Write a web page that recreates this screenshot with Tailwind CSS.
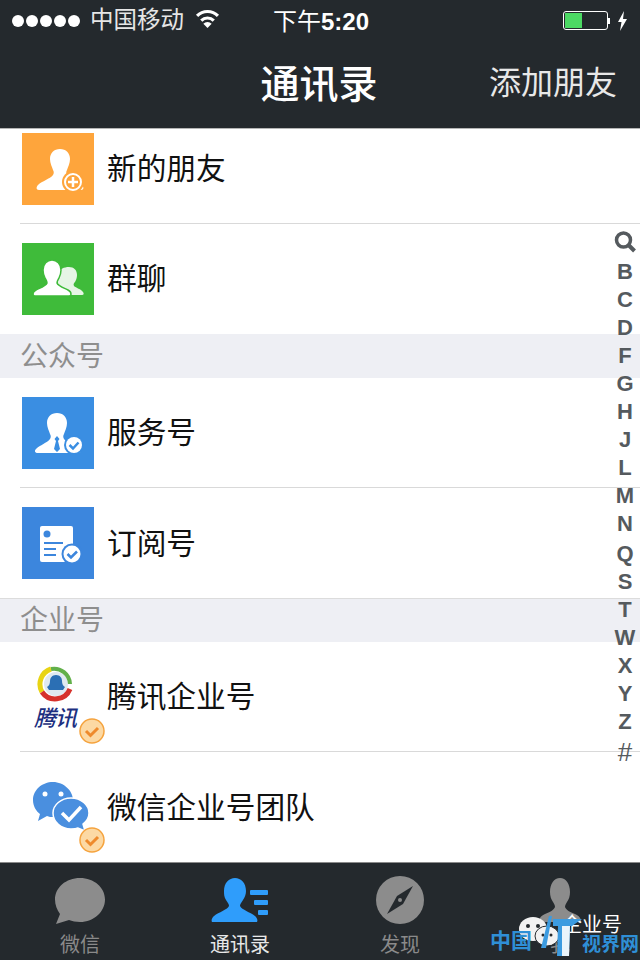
<!DOCTYPE html>
<html lang="zh-CN">
<head>
  <meta charset="UTF-8" />
  <title>通讯录</title>
  <script src="https://cdn.jsdelivr.net/npm/@tailwindcss/browser@4"></script>
</head>
<body class="bg-white font-['Liberation_Sans','Noto_Sans_CJK_SC',sans-serif] text-[#111]">
<div class="relative w-[640px] h-[960px] overflow-hidden flex flex-col">

  <!-- Status bar + nav -->
  <header class="h-[129px] shrink-0 bg-[#24292d] text-white border-b border-[#b5b5b5]">
    <div class="relative h-[41px] flex items-center pl-[12px] pr-[12px]">
      <div class="flex gap-[2px]">
        <span class="w-[12px] h-[12px] rounded-full bg-white"></span>
        <span class="w-[12px] h-[12px] rounded-full bg-white"></span>
        <span class="w-[12px] h-[12px] rounded-full bg-white"></span>
        <span class="w-[12px] h-[12px] rounded-full bg-white"></span>
        <span class="w-[12px] h-[12px] rounded-full bg-white"></span>
      </div>
      <span class="ml-[10px] text-[23.5px] leading-none text-[#e6e6e6]">中国移动</span>
      <svg class="ml-[11px] mt-[-4px]" width="25" height="19" viewBox="0 0 24 18" fill="none" stroke="#fff" stroke-width="3">
        <path d="M2 6.500a14 14 0 0 1 20 0" />
        <path d="M6 11a8.500 8.500 0 0 1 12 0" />
        <path d="M12 18l-4-4a5.600 5.600 0 0 1 8 0z" fill="#fff" stroke="none" />
      </svg>
      <span class="absolute left-[273px] top-[8px] text-[24px] leading-[28px]">下午<span class="font-bold">5:20</span></span>
      <div class="ml-auto flex items-center">
        <div class="w-[45px] h-[19px] rounded-[3px] border border-white p-[1px]">
          <div class="w-[17px] h-full bg-[#4cd964]"></div>
        </div>
        <span class="w-[2px] h-[6px] bg-white"></span>
        <svg class="ml-[7px]" width="11" height="20" viewBox="0 0 11 20"><path d="M7 0L1 11h3.500L3 20l7-12H6z" fill="#fff" /></svg>
      </div>
    </div>
    <div class="relative h-[87px] flex items-center justify-center">
      <h1 class="ml-[-2px] text-[39px] leading-none font-medium">通讯录</h1>
      <span class="absolute right-[23px] top-[26px] text-[32px] leading-none text-[#e8e8e8]">添加朋友</span>
    </div>
  </header>

  <!-- Contact list -->
  <main class="flex-1 flex flex-col">
    <div class="h-[94px] pl-[22px] flex items-start pt-[4px] gap-[13px]">
      <div class="w-[72px] h-[72px] bg-[#fea53c]">
        <svg width="72" height="72" viewBox="0 0 72 72">
          <path d="M38 16c6 0 10 4 10 10 0 4-2 8-3 11-1 2-1 3 0 5 3 4 11 6 15 10 2 2 2 5-1 5H17c-3 0-3-3-1-5 4-4 12-6 15-10 1-2 1-3 0-5-1-3-3-7-3-11 0-6 4-10 10-10z" fill="#fff" />
          <circle cx="51" cy="49" r="11" fill="#fea53c" />
          <circle cx="51" cy="49" r="8" fill="none" stroke="#fff" stroke-width="2" />
          <path d="M51 44v10M46 49h10" stroke="#fff" stroke-width="2.500" />
        </svg>
      </div>
      <span class="text-[29.7px] leading-[72px]">新的朋友</span>
    </div>
    <div class="ml-[20px] h-px bg-[#d9d9d9]"></div>

    <div class="h-[110px] pl-[22px] flex items-center gap-[13px]">
      <div class="w-[72px] h-[72px] bg-[#3fbb3a]">
        <svg width="72" height="72" viewBox="0 0 72 72">
          <path d="M47 24c5 0 8 3 8 8 0 3-1 5-2 7-1 1-2 2-1 4 2 2 7 3 9 6 1 1 1 3-1 3H36V30c2-4 6-6 11-6z" fill="#e6f5e5" />
          <path d="M11 51c0-1 1-3 3-4 4-2 10-4 11-7 0-2-1-3-2-5-1-2-2-5-2-8 0-6 4-10 9-10s9 4 9 10c0 3-1 6-2 8-1 2-2 3-2 5 1 3 7 5 11 7 2 1 3 3 3 4 0 2-1 2-2 2H13c-1 0-2 0-2-2z" fill="#fff" stroke="#3fbb3a" stroke-width="1.500" />
        </svg>
      </div>
      <span class="text-[29.7px] leading-none">群聊</span>
    </div>

    <div class="h-[44px] bg-[#eeeff4] pl-[20px] pt-[1px] flex items-center text-[28px] leading-none text-[#8e8e8e]">公众号</div>

    <div class="h-[109px] pl-[22px] flex items-center gap-[13px]">
      <div class="w-[72px] h-[72px] bg-[#3a8ee2]">
        <svg width="72" height="72" viewBox="0 0 72 72">
          <path d="M35 16c6 0 10 4 10 10 0 4-2 8-3 11-1 2-1 3 0 5 3 4 11 6 15 10 2 2 2 4-1 4H16c-3 0-4-2-2-4 4-4 11-6 14-10 1-2 1-3 0-5-1-3-3-7-3-11 0-6 4-10 10-10z" fill="#fff" />
          <path d="M35 39l-2.500 3 1.500 2-2 8 3 3 3-3-2-8 1.500-2z" fill="#3a8ee2" />
          <circle cx="52" cy="48" r="10" fill="#3a8ee2" />
          <circle cx="52" cy="48" r="8" fill="#fff" />
          <path d="M47.500 48l3.500 3.500 5.500-6" fill="none" stroke="#3a8ee2" stroke-width="2.500" />
        </svg>
      </div>
      <span class="mt-[1px] text-[29.7px] leading-none">服务号</span>
    </div>
    <div class="ml-[20px] h-px bg-[#d9d9d9]"></div>

    <div class="h-[110px] pl-[22px] flex items-center gap-[13px]">
      <div class="w-[72px] h-[72px] bg-[#3c86dd]">
        <svg width="72" height="72" viewBox="0 0 72 72">
          <rect x="18" y="19" width="33" height="36" rx="2" fill="#fff" />
          <circle cx="25" cy="27" r="3.500" fill="#3c86dd" />
          <path d="M22 36h19M22 42h12M22 48h12" stroke="#3c86dd" stroke-width="2.200" />
          <circle cx="50" cy="47" r="10.500" fill="#3c86dd" />
          <circle cx="50" cy="47" r="8.500" fill="#fff" />
          <path d="M45.500 47l3.500 3.500 6-6" fill="none" stroke="#3c86dd" stroke-width="2.500" />
        </svg>
      </div>
      <span class="mt-[1px] text-[29.7px] leading-none">订阅号</span>
    </div>

    <div class="h-[44px] bg-[#eeeff4] border-t border-[#dcdcdc] pl-[20px] flex items-center text-[28px] leading-none text-[#8e8e8e]">企业号</div>

    <div class="h-[109px] pl-[22px] flex items-center gap-[13px]">
      <div class="relative w-[72px] h-[72px]">
        <svg class="absolute left-[15px] top-[4px]" width="38" height="38" viewBox="0 0 38 38">
          <circle cx="19" cy="19" r="12" fill="#dfe9f0" />
          <path d="M5 27A16 16 0 0 1 14 4" fill="none" stroke="#e8d414" stroke-width="5" />
          <path d="M14 4a16 16 0 0 1 19 15" fill="none" stroke="#62b04a" stroke-width="4" />
          <path d="M5 27a16 16 0 0 0 28-3" fill="none" stroke="#d6312b" stroke-width="5" />
          <path d="M19 10c4 0 6 3 6 6 0 3 1 5 3 6l-2 3H12l-2-3c2-1 3-3 3-6 0-3 2-6 6-6z" fill="#2b6fb4" />
        </svg>
        <span class="absolute left-[12px] top-[47px] text-[22px] leading-none italic font-medium text-[#1c2f80] tracking-[-1px]">腾讯</span>
        <svg class="absolute left-[57px] top-[57px]" width="26" height="26" viewBox="0 0 26 26">
          <circle cx="13" cy="13" r="12" fill="#fcd9a4" stroke="#f5a33e" stroke-width="1.500" />
          <path d="M7 13l4.500 4.500L19 10" fill="none" stroke="#ee8a2c" stroke-width="3" />
        </svg>
      </div>
      <span class="mt-[1px] text-[29.7px] leading-none">腾讯企业号</span>
    </div>
    <div class="ml-[20px] h-px bg-[#d9d9d9]"></div>

    <div class="h-[110px] pl-[22px] flex items-center gap-[13px]">
      <div class="relative w-[72px] h-[72px]">
        <svg class="absolute left-[10px] top-[10px]" width="60" height="54" viewBox="0 0 60 54">
          <path d="M21 1C10 1 1 9 1 19c0 6 3 11 7 14l-2 7 9-5c2 1 4 1 6 1 11 0 20-8 20-17S32 1 21 1z" fill="#4a8fdf" />
          <circle cx="13" cy="13" r="2.500" fill="#fff" />
          <circle cx="29" cy="13" r="2.500" fill="#fff" />
          <path d="M39 17c-10 0-18 7-18 15 0 9 8 16 18 16 3 0 5 0 7-1l7 3-2-7c4-3 6-7 6-11 0-8-8-15-18-15z" fill="#4a8fdf" stroke="#fff" stroke-width="1.500" />
          <path d="M30 32l7 7 12-13" fill="none" stroke="#fff" stroke-width="3.500" />
        </svg>
        <svg class="absolute left-[57px] top-[56px]" width="26" height="26" viewBox="0 0 26 26">
          <circle cx="13" cy="13" r="12" fill="#fcd9a4" stroke="#f5a33e" stroke-width="1.500" />
          <path d="M7 13l4.500 4.500L19 10" fill="none" stroke="#ee8a2c" stroke-width="3" />
        </svg>
      </div>
      <span class="mt-[1px] text-[29.7px] leading-none">微信企业号团队</span>
    </div>
  </main>

  <!-- Tab bar -->
  <nav class="h-[98px] shrink-0 bg-[#24292d] border-t border-[#8a8a8a] grid grid-cols-4 text-[20px] leading-none text-[#8a8a8a]">
    <div class="flex flex-col items-center pt-[15px]">
      <svg width="52" height="46" viewBox="0 0 52 46"><path d="M26 0c14 0 25 9.500 25 21.500S40 44 26 44c-4 0-8-1-11-2L2 46l4-10C3 32 1 27 1 21.500 1 9.500 12 0 26 0z" fill="#8c8c8c" /></svg>
      <span class="mt-[11px]">微信</span>
    </div>
    <div class="flex flex-col items-center pt-[15px] text-[#e8e8e8]">
      <svg width="58" height="44" viewBox="0 0 58 44">
        <path d="M1 44c-1-2 0-4 2-6 5-4 13-6 15-10 0-2-1-3-3-6-2-3-2-6-2-9C13 5 18 0 24 0s11 5 11 13c0 3-1 6-3 9-2 3-3 4-3 6 2 4 10 6 15 10 2 2 3 4 2 6z" fill="#2f9dfb" />
        <rect x="39" y="12" width="18" height="5" rx="1" fill="#2f9dfb" />
        <rect x="43" y="22" width="14" height="5" rx="1" fill="#2f9dfb" />
        <rect x="47" y="32" width="10" height="5" rx="1" fill="#2f9dfb" />
      </svg>
      <span class="mt-[13px]">通讯录</span>
    </div>
    <div class="flex flex-col items-center pt-[13px]">
      <svg width="48" height="48" viewBox="0 0 48 48">
        <circle cx="24" cy="24" r="24" fill="#8c8c8c" />
        <path d="M37 10L27 28 11 38l10-18z" fill="#24292d" />
        <circle cx="24" cy="24" r="2" fill="#8c8c8c" />
      </svg>
      <span class="mt-[11px]">发现</span>
    </div>
    <div class="flex flex-col items-center pt-[15px]">
      <svg width="44" height="44" viewBox="0 0 44 44"><path d="M1 44c0-4 2-6 6-8 5-2 9-4 10-7 0-2-1-3-2-5-2-3-3-6-3-10 0-8 4-14 10-14s10 6 10 14c0 4-1 7-3 10-1 2-2 3-2 5 1 3 5 5 10 7 4 2 6 4 6 8z" fill="#8c8c8c" /></svg>
      <span class="mt-[13px]">我</span>
    </div>
  </nav>

  <!-- Alphabet index over the list -->
  <div class="absolute left-[610px] top-[228px] w-[30px] flex flex-col items-center text-[22px] leading-[28px] font-bold text-[#555a5e]">
    <svg class="mb-[4px]" width="22" height="26" viewBox="0 0 22 26" fill="none" stroke="#555a5e">
      <circle cx="9.500" cy="12" r="7" stroke-width="3.500" />
      <path d="M14.500 17l6 6" stroke-width="4" />
    </svg>
    <span>B</span><span>C</span><span>D</span><span>F</span><span>G</span><span>H</span><span>J</span><span>L</span><span>M</span><span>N</span>
    <span class="mt-[2px]">Q</span><span>S</span><span>T</span><span>W</span><span>X</span><span>Y</span><span>Z</span>
    <span class="mt-[2px] text-[26px] font-normal">#</span>
  </div>

  <!-- Watermark over the tab bar -->
  <svg class="absolute left-[518px] top-[914px]" width="46" height="34" viewBox="0 0 46 34">
    <ellipse cx="15" cy="15" rx="14" ry="12" fill="#f2f2f2" />
    <ellipse cx="29" cy="22" rx="12" ry="10" fill="#f2f2f2" stroke="#24292d" />
    <circle cx="10" cy="12" r="2" fill="#24292d" />
    <circle cx="20" cy="12" r="2" fill="#24292d" />
    <circle cx="25" cy="21" r="1.500" fill="#24292d" />
    <circle cx="33" cy="21" r="1.500" fill="#24292d" />
  </svg>
  <span class="absolute left-[562px] top-[915px] text-[20px] leading-none text-white">企业号</span>
  <span class="absolute left-[490px] top-[930px] text-[21px] leading-none font-bold text-[#2f8fd6]">中国</span>
  <svg class="absolute left-[538px] top-[914px]" width="46" height="44" viewBox="0 0 46 44">
    <path d="M11 2L3 34h5l6-32z" fill="#3c9be0" />
    <path d="M15 5h29l-10 7h-2l-1 30h-12l1-30h-5z" fill="#3c9be0" />
    <path d="M24 12h8l-1 30h-7z" fill="#eaf4fb" />
  </svg>
  <span class="absolute left-[582px] top-[935px] text-[19px] leading-none font-bold text-[#2f8fd6]">视界网</span>
</div>
</body>
</html>
